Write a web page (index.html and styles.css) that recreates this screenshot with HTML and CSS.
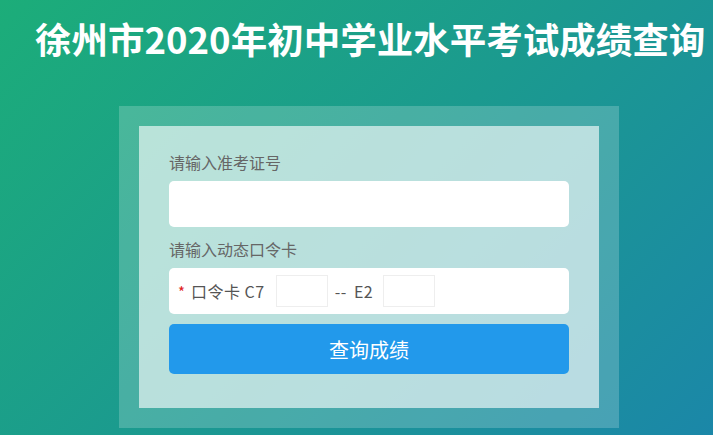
FILE: index.html
```html
<!DOCTYPE html>
<html lang="zh-CN">
<head>
  <meta charset="UTF-8">
  <meta name="viewport" content="width=device-width, initial-scale=1.0">
  <title>徐州市2020年初中学业水平考试成绩查询</title>
  <link rel="stylesheet" href="styles.css">
</head>
<body>
  <h1 class="title">徐州市2020年初中学业水平考试成绩查询</h1>

  <div class="frame">
    <form class="panel" id="queryForm">
      <label class="label" for="zkzh">请输入准考证号</label>
      <input class="field" type="text" id="zkzh" name="zkzh">

      <label class="label" for="kl1">请输入动态口令卡</label>
      <div class="field card-row">
        <span class="star">*</span>
        <span class="card-text">口令卡 C7</span>
        <input class="code" type="text" id="kl1" maxlength="3">
        <span class="card-text sep">-- E2</span>
        <input class="code" type="text" id="kl2" maxlength="3">
      </div>

      <button class="submit" type="submit">查询成绩</button>
    </form>
  </div>
</body>
</html>
```

FILE: styles.css
```css
html, body {
  height: 100%;
}

body {
  margin: 0;
  font-family: "Noto Sans CJK SC", "Noto Sans", sans-serif;
  background: linear-gradient(135deg, #1cad79 0%, #1b9a8f 50%, #1b87a8 100%);
  overflow: hidden;
}

.title {
  margin: 0;
  padding: 13px 0 0 35px;
  font-size: 36.5px;
  line-height: 52px;
  font-weight: bold;
  color: #fff;
  white-space: nowrap;
}

.frame {
  width: 460px;
  margin: 41px 0 0 119px;
  padding: 20px;
  background-color: rgba(255, 255, 255, 0.2);
}

.panel {
  display: flex;
  flex-direction: column;
  padding: 20px 30px 34px;
  background-color: rgba(255, 255, 255, 0.62);
}

.label {
  font-size: 16px;
  line-height: 32px;
  color: #666;
  margin-bottom: 3px;
}

.label + .field {
  margin-bottom: 6px;
}

.field {
  box-sizing: border-box;
  width: 400px;
  height: 46px;
  border: none;
  border-radius: 5px;
  background-color: #fff;
  font-size: 16px;
  padding: 0 10px;
  outline: none;
}

.label + .card-row {
  display: flex;
  align-items: center;
  padding-left: 9px;
  margin-bottom: 10px;
}

.star {
  color: #e02020;
  font-size: 15px;
  margin-right: 6px;
}

.card-text {
  font-size: 16px;
  color: #555;
  letter-spacing: 0.5px;
  margin-right: 11px;
}

.sep {
  margin-left: 7px;
  margin-right: 10px;
  word-spacing: 3px;
}

.code {
  box-sizing: border-box;
  width: 52px;
  height: 32px;
  border: 1px solid #eee;
  outline: none;
  font-size: 15px;
  padding: 0 4px;
}

.submit {
  width: 400px;
  height: 50px;
  border: none;
  border-radius: 5px;
  background-color: #2299eb;
  color: #fff;
  font-family: inherit;
  font-size: 20px;
  cursor: pointer;
}
```
